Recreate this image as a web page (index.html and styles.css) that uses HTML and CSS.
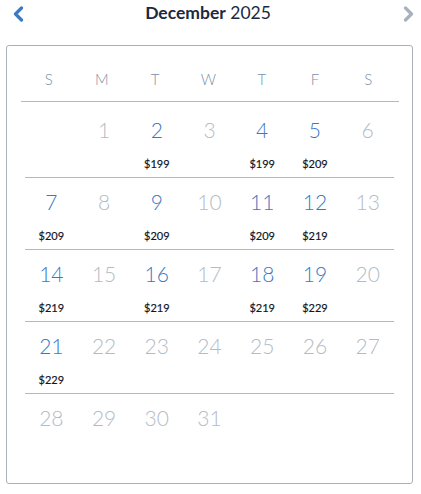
FILE: index.html
```html
<!DOCTYPE html>
<html>
<head>
<meta charset="utf-8">
<link rel="stylesheet" href="styles.css">
</head>
<body>
<div class="cal">
  <div class="top">
    <button class="nav prev" aria-label="Previous month">
      <svg width="12" height="16" viewBox="0 0 12 16"><path d="M9.5 2 L3.5 8 L9.5 14" fill="none" stroke="currentColor" stroke-width="3.2" stroke-linecap="round" stroke-linejoin="round"/></svg>
    </button>
    <div class="title"><b>December</b> 2025</div>
    <button class="nav next" aria-label="Next month">
      <svg width="12" height="16" viewBox="0 0 12 16"><path d="M2.5 2 L8.5 8 L2.5 14" fill="none" stroke="currentColor" stroke-width="3.2" stroke-linecap="round" stroke-linejoin="round"/></svg>
    </button>
  </div>
  <div class="box">
    <div class="dow">
      <span>S</span><span>M</span><span>T</span><span>W</span><span>T</span><span>F</span><span>S</span>
    </div>
    <div class="week first">
      <div class="day"></div>
      <div class="day off"><span class="num">1</span></div>
      <div class="day on"><span class="num">2</span><span class="price">$199</span></div>
      <div class="day off"><span class="num">3</span></div>
      <div class="day on"><span class="num">4</span><span class="price">$199</span></div>
      <div class="day on"><span class="num">5</span><span class="price">$209</span></div>
      <div class="day off"><span class="num">6</span></div>
    </div>
    <div class="week">
      <div class="day on"><span class="num">7</span><span class="price">$209</span></div>
      <div class="day off"><span class="num">8</span></div>
      <div class="day on"><span class="num">9</span><span class="price">$209</span></div>
      <div class="day off"><span class="num">10</span></div>
      <div class="day on"><span class="num">11</span><span class="price">$209</span></div>
      <div class="day on"><span class="num">12</span><span class="price">$219</span></div>
      <div class="day off"><span class="num">13</span></div>
    </div>
    <div class="week">
      <div class="day on"><span class="num">14</span><span class="price">$219</span></div>
      <div class="day off"><span class="num">15</span></div>
      <div class="day on"><span class="num">16</span><span class="price">$219</span></div>
      <div class="day off"><span class="num">17</span></div>
      <div class="day on"><span class="num">18</span><span class="price">$219</span></div>
      <div class="day on"><span class="num">19</span><span class="price">$229</span></div>
      <div class="day off"><span class="num">20</span></div>
    </div>
    <div class="week">
      <div class="day on"><span class="num">21</span><span class="price">$229</span></div>
      <div class="day off"><span class="num">22</span></div>
      <div class="day off"><span class="num">23</span></div>
      <div class="day off"><span class="num">24</span></div>
      <div class="day off"><span class="num">25</span></div>
      <div class="day off"><span class="num">26</span></div>
      <div class="day off"><span class="num">27</span></div>
    </div>
    <div class="week last">
      <div class="day off"><span class="num">28</span></div>
      <div class="day off"><span class="num">29</span></div>
      <div class="day off"><span class="num">30</span></div>
      <div class="day off"><span class="num">31</span></div>
      <div class="day"></div>
      <div class="day"></div>
      <div class="day"></div>
    </div>
  </div>
</div>
</body>
</html>
```
FILE: styles.css
```css
html, body {
  margin: 0;
  padding: 0;
  background: #ffffff;
}
body {
  font-family: Lato, "Open Sans", sans-serif;
}
.cal {
  width: 421px;
  padding: 0 8px 0 6px;
  box-sizing: border-box;
}
.top {
  display: grid;
  grid-template-columns: 1fr auto 1fr;
  align-items: center;
  height: 27px;
  margin-bottom: 18px;
}
.nav {
  border: 0;
  background: none;
  padding: 0;
  width: 12px;
  height: 16px;
  display: flex;
}
.prev {
  color: #3c7ac4;
  margin-left: 6px;
  justify-self: start;
}
.next {
  color: #a8b2bd;
  margin-right: -2px;
  justify-self: end;
}
.title {
  font-size: 17.5px;
  color: #1a2a45;
  margin-left: -3px;
  padding-bottom: 2px;
}
.title b {
  font-weight: 700;
}
.box {
  border: 1px solid #a7b1bb;
  border-radius: 3px;
  height: 437px;
  padding: 0 13px 0 14px;
}
.dow {
  display: grid;
  grid-template-columns: repeat(7, 1fr);
  height: 54px;
  align-items: center;
  border-bottom: 1px solid #b0b8c1;
  padding: 0 4px 0 1px;
  margin-top: 1px;
}
.dow span {
  text-align: center;
  font-size: 15px;
  font-weight: 300;
  color: #7a90a8;
  padding-top: 10px;
}
.week {
  display: grid;
  grid-template-columns: repeat(7, 1fr);
  height: 71px;
  border-bottom: 1px solid #b0b8c1;
  margin: 0 5px 0 4px;
}
.week.first {
  height: 75px;
}
.week.last {
  border-bottom: 0;
}
.day {
  display: flex;
  flex-direction: column;
  align-items: center;
  padding-top: 11px;
}
.week.first .day {
  padding-top: 15px;
}
.num {
  font-size: 21px;
  font-weight: 300;
  line-height: 26px;
}
.on .num {
  color: #3a78c3;
}
.off .num {
  color: #b3bcc5;
}
.price {
  margin-top: 14px;
  font-size: 11px;
  font-weight: 400;
  color: #0f1626;
  line-height: 14px;
  -webkit-text-stroke: 0.2px #0f1626;
}
```
